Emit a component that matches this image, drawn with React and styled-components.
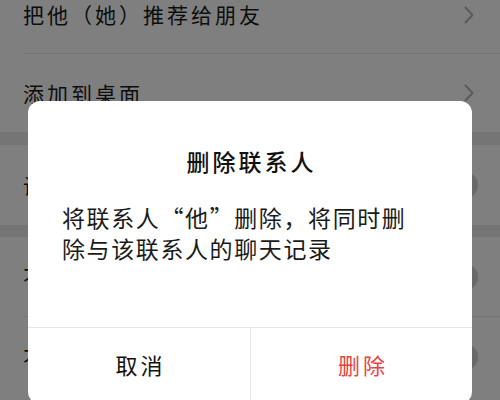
import React from 'react';
import styled, { createGlobalStyle } from 'styled-components';

const GlobalStyle = createGlobalStyle`
  html, body {
    margin: 0;
    padding: 0;
    background: #ffffff;
  }

  body {
    font-family: 'Noto Sans CJK SC', 'Noto Sans', sans-serif;
  }
`

const Screen = styled.div`
  position: relative;
  width: 500px;
  height: 400px;
  overflow: hidden;
  background-color: #ffffff;
`

const List = styled.div`
  display: flex;
  flex-direction: column;
  margin-top: -24px;
`

const Row = styled.div`
  display: flex;
  height: ${props => props.tall ? '80px' : '78px'};
  padding-left: 23px;
  box-sizing: border-box;
`

const RowInner = styled.div`
  flex: 1;
  display: flex;
  align-items: center;
  justify-content: space-between;
  padding-right: 26px;
  box-sizing: border-box;
  border-bottom: ${props => props.divided ? '1px solid #e6e6e6' : 'none'};
`

const RowLabel = styled.span`
  font-size: 21px;
  letter-spacing: 3px;
  color: #1a1a1a;
  line-height: 1;
`

const Gap = styled.div`
  height: ${props => props.size}px;
  background-color: #ebebeb;
`

const Knob = styled.span`
  display: block;
  width: 26px;
  height: 26px;
  margin-right: -4px;
  border-radius: 50%;
  background-color: #d2d2d2;
`

const Overlay = styled.div`
  position: absolute;
  inset: 0;
  display: flex;
  flex-direction: column;
  align-items: center;
  padding-top: 101px;
  box-sizing: border-box;
  background-color: rgba(0, 0, 0, 0.5);
`

const Dialog = styled.div`
  width: 444px;
  flex-shrink: 0;
  border-radius: 12px;
  background-color: #ffffff;
  overflow: hidden;
`

const Title = styled.h2`
  margin: 0;
  padding: 45px 0 0 3px;
  text-align: center;
  font-size: 23px;
  font-weight: 500;
  letter-spacing: 3px;
  line-height: 30px;
  color: #111111;
`

const Message = styled.p`
  margin: 0;
  padding: 26px 30px 63px 34px;
  font-size: 23px;
  letter-spacing: 1.6px;
  line-height: 31px;
  color: #1a1a1a;
`

const Quote = styled.span`
  font-feature-settings: 'fwid';
`

const Actions = styled.div`
  display: grid;
  grid-template-columns: 1fr 1fr;
  border-top: 1px solid #e5e5e5;
`

const ActionButton = styled.button`
  height: 76px;
  padding: 0 0 4px 3px;
  border: none;
  border-left: ${props => props.first ? 'none' : '1px solid #e5e5e5'};
  background: none;
  font-family: inherit;
  font-size: 22px;
  letter-spacing: 3px;
  color: ${props => props.danger ? '#e64340' : '#111111'};
`

function Chevron() {
  return (
    <svg width="10" height="18" viewBox="0 0 10 18" fill="none">
      <path d="M1.5 1.5 L8.5 9 L1.5 16.5" stroke="#b5b5b5" strokeWidth="2" strokeLinecap="round" strokeLinejoin="round" />
    </svg>
  )
}

function App() {
  return (
    <Screen>
      <GlobalStyle />

      <List>
        <Row>
          <RowInner divided>
            <RowLabel>把他（她）推荐给朋友</RowLabel>
            <Chevron />
          </RowInner>
        </Row>
        <Row>
          <RowInner>
            <RowLabel>添加到桌面</RowLabel>
            <Chevron />
          </RowInner>
        </Row>

        <Gap size={13} />

        <Row tall>
          <RowInner>
            <RowLabel>设为星标朋友</RowLabel>
            <Knob />
          </RowInner>
        </Row>

        <Gap size={12} />

        <Row tall>
          <RowInner divided>
            <RowLabel>不让他（她）看我的朋友圈</RowLabel>
            <Knob />
          </RowInner>
        </Row>
        <Row tall>
          <RowInner>
            <RowLabel>不看他（她）的朋友圈</RowLabel>
            <Knob />
          </RowInner>
        </Row>
      </List>

      <Overlay>
        <Dialog>
          <Title>删除联系人</Title>
          <Message>
            将联系人<Quote>“</Quote>他<Quote>”</Quote>删除，将同时删<br />
            除与该联系人的聊天记录
          </Message>
          <Actions>
            <ActionButton first>取消</ActionButton>
            <ActionButton danger>删除</ActionButton>
          </Actions>
        </Dialog>
      </Overlay>
    </Screen>
  )
}

export default App;
